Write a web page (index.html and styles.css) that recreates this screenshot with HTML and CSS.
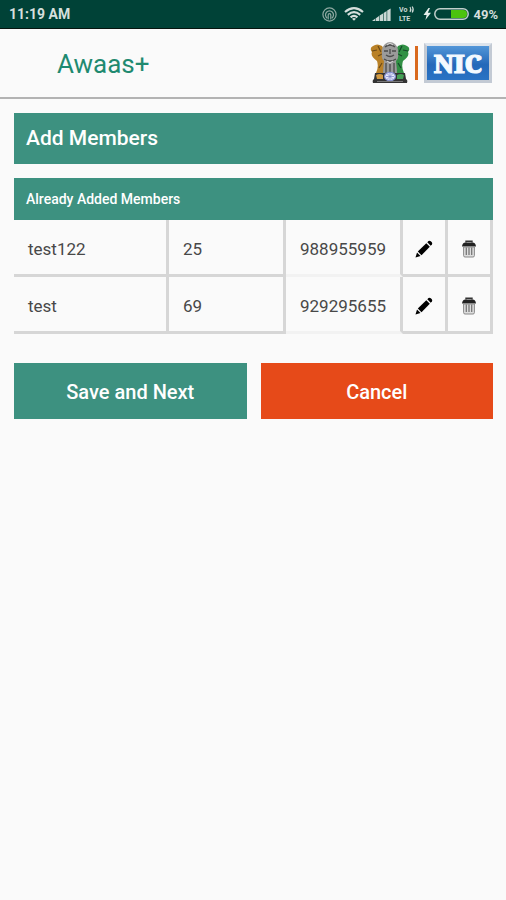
FILE: index.html
```
<!DOCTYPE html>
<html lang="en">
<head>
    <meta charset="UTF-8">
    <meta name="viewport" content="width=device-width, initial-scale=1.0">
    <title>Awaas+</title>
    <link rel="stylesheet" href="styles.css">
</head>
<body>
    <svg class="defs" width="0" height="0" aria-hidden="true">
        <symbol id="pencil" viewBox="0 0 18 18">
            <path d="M0.5 17.5 L2 12.5 L5.5 16 Z"/>
            <path d="M2.8 11.4 L11.3 3.2 L14.8 6.7 L6.5 15.2 Z"/>
            <path d="M12.3 2.3 L13.5 1 Q14.6 0.2 15.8 1.2 L16.8 2.2 Q17.7 3.3 16.9 4.4 L15.7 5.7 Z"/>
        </symbol>
        <symbol id="trash" viewBox="0 0 16 18">
            <path d="M5 2.6 V1.2 H11 V2.6" fill="none" stroke="#333" stroke-width="1.4"/>
            <path d="M1 6.6 Q1.4 2.4 4.5 2.4 H11.5 Q14.6 2.4 15 6.6 Z" fill="#222"/>
            <path d="M2.6 7 H13.4 V15.6 Q13.4 17 12 17 H4 Q2.6 17 2.6 15.6 Z" fill="#ddd" stroke="#888"/>
            <path d="M5.3 7.5 V15 M8 7.5 V15 M10.7 7.5 V15" stroke="#777" stroke-width="1.3"/>
        </symbol>
    </svg>

    <div class="status">
        <span class="time">11:19 AM</span>
        <div class="statusIcons">
            <svg class="hotspot" width="15" height="15" viewBox="0 0 15 15" fill="none" stroke="#8fa9a2" stroke-width="1.2">
                <circle cx="7.5" cy="7.5" r="6.6"/>
                <path d="M5.2 11.2 A4 4 0 1 1 9.8 11.2"/>
                <path d="M6.2 12.5 V8 A1.3 1.3 0 0 1 8.8 8 V12.5"/>
            </svg>
            <svg class="wifi" width="20" height="14" viewBox="0 0 20 14" fill="none" stroke="#d5dfdc" stroke-width="2.2">
                <path d="M1 5 Q10 -2.6 19 5"/>
                <path d="M3.8 7.8 Q10 2.4 16.2 7.8"/>
                <path d="M6.6 10.4 Q10 7.4 13.4 10.4"/>
                <path d="M8 11.8 Q10 10.2 12 11.8 L10 13.8 Z" fill="#d5dfdc" stroke="none"/>
            </svg>
            <svg class="signal" width="19" height="13" viewBox="0 0 19 13" fill="#cbd7d4">
                <path d="M0 13 L3 10.8 V13 Z"/>
                <path d="M3.6 10.4 L7 8 V13 H3.6 Z"/>
                <path d="M7.6 7.6 L11 5.4 V13 H7.6 Z"/>
                <path d="M11.6 5 L14.6 3 V13 H11.6 Z"/>
                <path d="M15.2 2.6 L18.6 0.4 V13 H15.2 Z"/>
            </svg>
            <svg class="volte" width="16" height="16" viewBox="0 0 16 16">
                <text x="0" y="6">Vo</text>
                <path d="M11 1 Q12.6 3.5 11 6 M13.2 0.5 Q15.2 3.5 13.2 6.5" fill="none" stroke="#cbd7d4" stroke-width="1.2"/>
                <text x="0" y="15">LTE</text>
            </svg>
            <svg class="battery" width="46" height="14" viewBox="0 0 46 14">
                <path d="M5.5 1 L0.5 8 H3.6 L2.4 13 L8 5.8 H4.8 L7 1 Z" fill="#e6eeeb"/>
                <rect x="11.8" y="1.8" width="33.4" height="10.4" rx="5.2" fill="none" stroke="#c2cfcb" stroke-width="1.5"/>
                <path d="M28 3 H40 A4 4 0 0 1 40 11 H28 Z" fill="#4cc30e"/>
            </svg>
            <span>49%</span>
        </div>
    </div>

    <header>
        <h1>Awaas+</h1>
        <div class="logos">
            <svg class="emblem" width="40" height="42" viewBox="0 0 40 42" role="img" aria-label="State Emblem of India">
                <path d="M8 12 H32 L31 33 H9 Z" fill="#777"/>
                <!-- side lions -->
                <path d="M3 4 Q7 1 12 4 L15 9 L13 31 Q8 35 6 31 Q9 25 7 19 Q0 14 2 10 Q-1 6 3 4 Z" fill="#b98127"/>
                <path d="M37 4 Q33 1 28 4 L25 9 L27 31 Q32 35 34 31 Q31 25 33 19 Q40 14 38 10 Q41 6 37 4 Z" fill="#309044"/>
                <path d="M2 9 L7 8 M8 4 L11 10 M8 14 L12 12 M9 26 L12 21" stroke="#6b4a17" stroke-width="1.2"/>
                <path d="M38 9 L33 8 M32 4 L29 10 M32 14 L28 12 M31 26 L28 21" stroke="#16472a" stroke-width="1.2"/>
                <!-- middle lion -->
                <path d="M15 2 Q20 -2 25 2 Q29 6 28 12 Q29 16 26 19 L27 31 H13 L14 19 Q11 16 12 12 Q11 6 15 2 Z" fill="#9a9a9a"/>
                <path d="M15 5 Q20 1 25 5 M14 9 H18 M22 9 H26 M16 13 Q20 16 24 13 M20 7 V12 M14 17 Q20 21 26 17 M16 21 V31 M20 22 V30 M24 21 V31" fill="none" stroke="#4b4b4b" stroke-width="1.3"/>
                <path d="M17 3 L20 1 L23 3 M17 19 L20 21 L23 19" fill="none" stroke="#dcdcdc"/>
                <!-- base with the wheel -->
                <path d="M5 31 H35 L36 37 Q38 38 37 41 H3 Q2 38 4 37 Z" fill="#333"/>
                <path d="M6 33 Q10 31 13 33 V37 H7 Z" fill="#d29a42"/>
                <path d="M27 33 Q31 31 34 33 L33 37 H27 Z" fill="#44a055"/>
                <ellipse cx="20" cy="34.5" rx="5.4" ry="4.2" fill="#e6e9fb" stroke="#8791d0" stroke-width="1.2"/>
                <path d="M20 31 V38 M16 34.5 H24 M17.5 32 L22.5 37 M22.5 32 L17.5 37" stroke="#7883c6" stroke-width="0.7"/>
                <path d="M7 39.5 H33" stroke="#777"/>
            </svg>
            <span class="divider"></span>
            <span class="nic">NIC</span>
        </div>
    </header>

    <main>
        <h2>Add Members</h2>
        <table>
            <caption>Already Added Members</caption>
            <tr>
                <td class="name">test122</td>
                <td class="age">25</td>
                <td class="phone">988955959</td>
                <td class="action"><button class="icon" aria-label="Edit test122"><svg width="18" height="18"><use href="#pencil"/></svg></button></td>
                <td class="action"><button class="icon" aria-label="Delete test122"><svg width="16" height="18"><use href="#trash"/></svg></button></td>
            </tr>
            <tr>
                <td class="name">test</td>
                <td class="age">69</td>
                <td class="phone">929295655</td>
                <td class="action"><button class="icon" aria-label="Edit test"><svg width="18" height="18"><use href="#pencil"/></svg></button></td>
                <td class="action"><button class="icon" aria-label="Delete test"><svg width="16" height="18"><use href="#trash"/></svg></button></td>
            </tr>
        </table>
        <div class="buttons">
            <button class="save">Save and Next</button>
            <button class="cancel">Cancel</button>
        </div>
    </main>
</body>
</html>
```
FILE: styles.css
```
* {
    margin: 0;
    padding: 0;
    box-sizing: border-box;
    font-family: Roboto, Arial, sans-serif;
}
body {
    background-color: #fafafa;
    color: #484848;
}
.defs {
    position: absolute;
}
.status {
    display: flex;
    justify-content: space-between;
    align-items: center;
    height: 29px;
    padding: 0 8px 0 9px;
    background-color: #004237;
    border-bottom: 1px solid #06150f;
    color: #d5dfdc;
    font-size: 13px;
    font-weight: 700;
}
.time {
    font-size: 14px;
}
.statusIcons {
    display: flex;
    align-items: center;
}
.hotspot {
    margin-right: 7px;
}
.signal, .volte {
    margin-left: 8px;
}
.volte text {
    font-size: 7px;
    fill: #cbd7d4;
}
.battery {
    margin: 0 4px 0 8px;
}
header {
    display: flex;
    justify-content: space-between;
    align-items: center;
    height: 70px;
    padding: 0 14px 0 57px;
    border-bottom: 2px solid #b3b3b3;
}
h1 {
    color: #1f8a70;
    font-size: 26px;
    font-weight: 400;
    padding-top: 2px;
}
.logos {
    display: flex;
    align-items: center;
}
.divider {
    width: 3px;
    height: 34px;
    margin: 0 6px 0 5px;
    background-color: #d9691e;
}
.nic {
    width: 68px;
    height: 40px;
    border: 3px solid #c3cad4;
    border-top-color: #dde4ec;
    background: linear-gradient(#5296d8, #2468b9 55%, #2a73c4);
    color: #f4faff;
    font-family: "Noto Serif", "DejaVu Serif", serif;
    font-size: 25px;
    font-weight: 900;
    line-height: 34px;
    text-align: center;
    -webkit-text-stroke: 1px #f4faff;
}
main {
    padding: 14px 13px 14px 14px;
}
h2 {
    padding: 0 12px;
    margin-bottom: 14px;
    background-color: #3d9180;
    color: white;
    font-size: 21px;
    font-weight: 500;
    line-height: 51px;
}
table {
    width: 100%;
    table-layout: fixed;
    border-spacing: 0;
}
caption {
    padding: 0 12px;
    background-color: #3d9180;
    color: white;
    font-size: 14px;
    font-weight: 500;
    line-height: 42px;
    text-align: left;
}
td {
    height: 57px;
    padding: 3px 0 0 14px;
    border-right: 3px solid #d6d6d6;
    border-bottom: 3px solid #d6d6d6;
    font-size: 17px;
}
.age, .phone {
    width: 117px;
}
.phone {
    border-bottom-color: #f2f2f2;
}
.action {
    width: 45px;
    padding-left: 0;
}
.icon {
    display: block;
    width: 100%;
    border: 0;
    background: none;
}
.icon svg {
    display: block;
    margin: auto;
}
.buttons {
    display: flex;
    gap: 14px;
    margin-top: 29px;
}
.save, .cancel {
    flex: 1;
    height: 56px;
    padding-top: 2px;
    border: 0;
    background-color: #3d9180;
    color: white;
    font-size: 20px;
    font-weight: 500;
}
.cancel {
    background-color: #e64a19;
}
```
